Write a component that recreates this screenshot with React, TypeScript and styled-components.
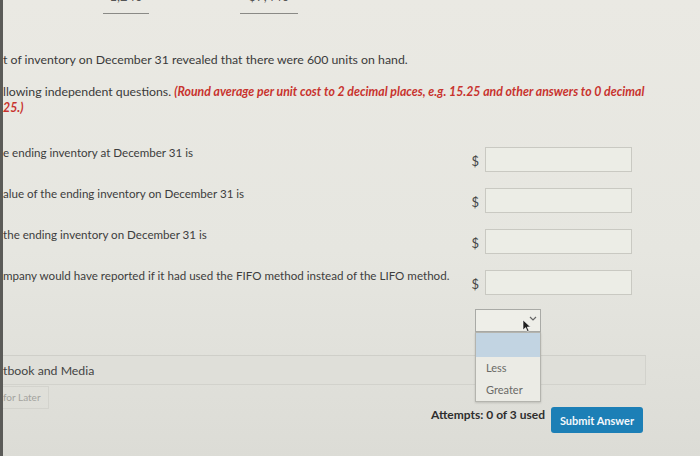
import React from "react";
import styled, { createGlobalStyle } from "styled-components";

const GlobalStyle = createGlobalStyle`
  html, body {
    margin: 0;
    padding: 0;
  }
  body {
    width: 700px;
    height: 456px;
    overflow: hidden;
    font-family: Lato, "Open Sans", Arial, sans-serif;
    background: linear-gradient(180deg, #eae9e3 0%, #e6e6e0 55%, #dcdcd6 100%);
    color: #3b3b3b;
  }
`;

const Page = styled.div`
  position: relative;
  height: 456px;
  border-left: 3px solid #5b5b58;
  box-sizing: border-box;
  display: flex;
  flex-direction: column;
`;

const TotalsRow = styled.div`
  display: flex;
  height: 14px;
  padding-left: 100px;
  gap: 91px;
  overflow: hidden;
`;

const Total = styled.div<{ $w: number }>`
  width: ${(p) => p.$w}px;
  height: 13px;
  border-bottom: 2px solid #8a8a86;
  text-align: center;
  font-size: 13px;
  line-height: 16px;
  color: #555;
  overflow: hidden;
`;

const TotalText = styled.div`
  margin-top: -12px;
`;

const Intro = styled.p`
  margin: 38px 0 0;
  font-size: 12.3px;
  line-height: 16px;
  white-space: nowrap;
  color: #3a3a3a;
`;

const Instruction = styled.p`
  margin: 16px 0 0;
  font-size: 12.3px;
  line-height: 16px;
  white-space: nowrap;
  color: #3a3a3a;
`;

const Emph = styled.span`
  color: #c8332e;
  font-weight: 700;
  font-style: italic;
`;

const Questions = styled.div`
  margin-top: 31px;
  display: flex;
  flex-direction: column;
  gap: 16px;
`;

const QuestionRow = styled.div`
  display: flex;
  align-items: center;
  padding-right: 68px;
`;

const Label = styled.div`
  flex: 1;
  min-width: 0;
  align-self: flex-start;
  margin-top: -2px;
  font-size: 11.6px;
  line-height: 16px;
  white-space: nowrap;
  color: #3d3d3d;
`;

const Dollar = styled.span`
  font-size: 13px;
  color: #444;
  margin-right: 6px;
  padding-top: 2px;
`;

const AmountInput = styled.div`
  width: 147px;
  height: 25px;
  box-sizing: border-box;
  border: 1px solid #c9c9c2;
  background: #ecede6;
`;

const SelectRow = styled.div`
  margin-top: 14px;
  display: flex;
  justify-content: flex-end;
  padding-right: 159px;
`;

const SelectBox = styled.div`
  position: relative;
  width: 66px;
  height: 23px;
  box-sizing: border-box;
  border: 1px solid #a9aaa6;
  background: #eeeee8;
`;

const Chevron = styled.svg`
  position: absolute;
  right: 3px;
  top: 6px;
`;

const Pointer = styled.svg`
  position: absolute;
  right: 9px;
  top: 9px;
  z-index: 3;
`;

const Menu = styled.div`
  position: absolute;
  left: -1px;
  top: 22px;
  width: 66px;
  box-sizing: border-box;
  border: 1px solid #b4b4ae;
  background: #ebebe5;
  z-index: 2;
  box-shadow: 0 1px 2px rgba(0, 0, 0, 0.15);
`;

const Option = styled.div<{ $active?: boolean }>`
  height: 22px;
  line-height: 22px;
  padding-left: 10px;
  font-size: 11px;
  color: #6a6a66;
  background: ${(p) => (p.$active ? "#c2d4e2" : "transparent")};
  &:first-child {
    height: 24px;
  }
`;

const Band = styled.div`
  margin-top: 23px;
  width: 643px;
  height: 30px;
  box-sizing: border-box;
  border-top: 1px solid #cfcfc9;
  border-bottom: 1px solid #d2d2cc;
  border-right: 1px solid #d2d2cc;
  background: #dfdfd9;
  display: flex;
  align-items: center;
  font-size: 12.3px;
  color: #444;
`;

const Footer = styled.div`
  margin-top: 1px;
  display: flex;
  justify-content: space-between;
  align-items: flex-start;
  padding-right: 57px;
`;

const LaterButton = styled.div`
  height: 23px;
  box-sizing: border-box;
  border: 1px solid #d3d3cd;
  border-left: none;
  padding: 0 7px 0 0;
  line-height: 21px;
  font-size: 10px;
  color: #a3a39e;
`;

const SubmitGroup = styled.div`
  margin-top: 21px;
  display: flex;
  align-items: center;
  gap: 6px;
`;

const Attempts = styled.span`
  font-size: 12px;
  font-weight: 700;
  color: #2e2e2e;
  margin-top: -12px;
`;

const SubmitButton = styled.button`
  width: 92px;
  height: 26px;
  border: none;
  border-radius: 3px;
  background: #1c7fb6;
  color: #f4f8fb;
  font-family: Lato, "Open Sans", Arial, sans-serif;
  font-size: 11px;
  font-weight: 700;
  padding: 0;
`;

const questions = [
  "e ending inventory at December 31 is",
  "alue of the ending inventory on December 31 is",
  "the ending inventory on December 31 is",
  "mpany would have reported if it had used the FIFO method instead of the LIFO method.",
];

export default function App() {
  return (
    <>
      <GlobalStyle />
      <Page>
        <TotalsRow>
          <Total $w={46}>
            <TotalText>1,240</TotalText>
          </Total>
          <Total $w={58}>
            <TotalText>$7,440</TotalText>
          </Total>
        </TotalsRow>

        <Intro>t of inventory on December 31 revealed that there were 600 units on hand.</Intro>

        <Instruction>
          llowing independent questions.{" "}
          <Emph>
            (Round average per unit cost to 2 decimal places, e.g. 15.25 and other answers to 0 decimal
            <br />
            25.)
          </Emph>
        </Instruction>

        <Questions>
          {questions.map((q) => (
            <QuestionRow key={q}>
              <Label>{q}</Label>
              <Dollar>$</Dollar>
              <AmountInput />
            </QuestionRow>
          ))}
        </Questions>

        <SelectRow>
          <SelectBox>
            <Chevron width="8" height="5" viewBox="0 0 8 5">
              <path d="M1 1l3 3 3-3" fill="none" stroke="#666" strokeWidth="1.2" />
            </Chevron>
            <Pointer width="9" height="13" viewBox="0 0 9 13">
              <path d="M1 1v10l2.6-2.4 1.8 4 1.6-.7-1.8-3.9H8.5z" fill="#1e1e1e" stroke="#fff" strokeWidth="0.6" />
            </Pointer>
            <Menu>
              <Option $active />
              <Option>Less</Option>
              <Option>Greater</Option>
            </Menu>
          </SelectBox>
        </SelectRow>

        <Band>tbook and Media</Band>

        <Footer>
          <LaterButton>for Later</LaterButton>
          <SubmitGroup>
            <Attempts>Attempts: 0 of 3 used</Attempts>
            <SubmitButton>Submit Answer</SubmitButton>
          </SubmitGroup>
        </Footer>
      </Page>
    </>
  );
}
